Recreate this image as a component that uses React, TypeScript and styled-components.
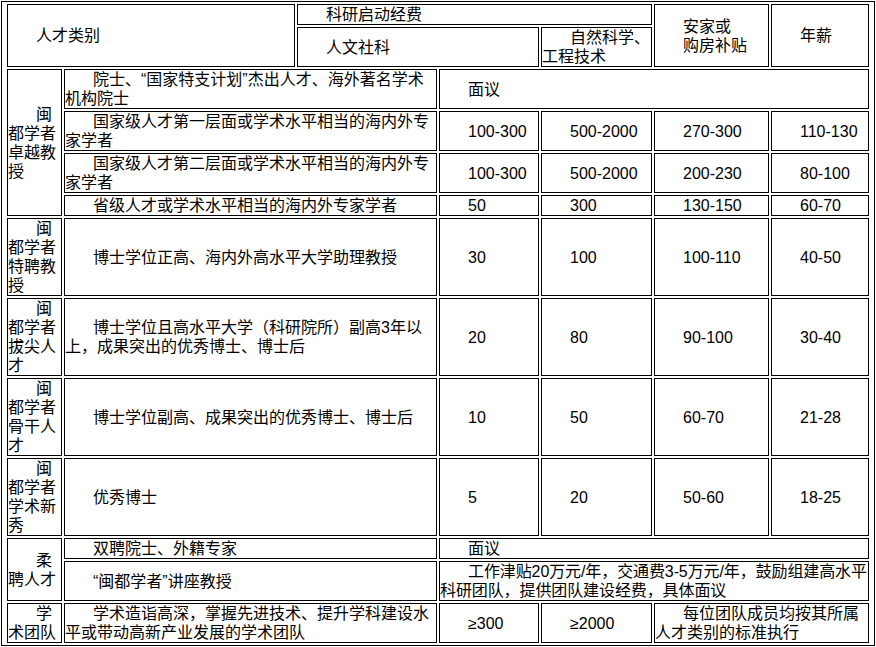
import styled, { createGlobalStyle, css } from "styled-components";

const GlobalStyle = createGlobalStyle`
    body {
        margin: 1px 0 0 1px;
        background: #fff;
        color: #000;
        font-family: "Liberation Sans", "Noto Sans CJK SC", sans-serif;
        font-size: 16px;
        line-height: 19px;
    }
`;

const Frame = styled.div`
    border: 1px solid #000;
    padding: 2px 5px;
    width: max-content;
`;

const Grid = styled.div`
    display: grid;
    grid-template-columns: 55px 231px 140px 100px 111px 115px 98px;
    grid-template-rows: 21px 40px 40px 40px 40px 21px 78px 78px 78px 78px 21px 40px 40px;
    gap: 2px;
`;

type CellProps = {
    $col: number;
    $row: number;
    $colSpan?: number;
    $rowSpan?: number;
    $tight?: boolean;
};

const Cell = styled.div<CellProps>`
    grid-column: ${(p) => `${p.$col} / span ${p.$colSpan ?? 1}`};
    grid-row: ${(p) => `${p.$row} / span ${p.$rowSpan ?? 1}`};
    border: 1px solid #000;
    display: flex;
    flex-direction: column;
    justify-content: center;
    text-indent: 28px;
    min-width: 0;
    overflow: hidden;

    ${(p) =>
        p.$tight &&
        css`
            letter-spacing: -0.1px;
        `}
`;

const Line = styled.div`
    display: block;
`;

type ValueRow = {
    category?: string;
    catSpan?: number;
    desc: string;
    values: string[];
};

const rows: ValueRow[] = [
    { category: "闽都学者卓越教授", catSpan: 4, desc: "国家级人才第一层面或学术水平相当的海内外专家学者", values: ["100-300", "500-2000", "270-300", "110-130"] },
    { desc: "国家级人才第二层面或学术水平相当的海内外专家学者", values: ["100-300", "500-2000", "200-230", "80-100"] },
    { desc: "省级人才或学术水平相当的海内外专家学者", values: ["50", "300", "130-150", "60-70"] },
    { category: "闽都学者特聘教授", catSpan: 1, desc: "博士学位正高、海内外高水平大学助理教授", values: ["30", "100", "100-110", "40-50"] },
    { category: "闽都学者拔尖人才", catSpan: 1, desc: "博士学位且高水平大学（科研院所）副高3年以上，成果突出的优秀博士、博士后", values: ["20", "80", "90-100", "30-40"] },
    { category: "闽都学者骨干人才", catSpan: 1, desc: "博士学位副高、成果突出的优秀博士、博士后", values: ["10", "50", "60-70", "21-28"] },
    { category: "闽都学者学术新秀", catSpan: 1, desc: "优秀博士", values: ["5", "20", "50-60", "18-25"] },
];

function App() {
    return (
        <>
            <GlobalStyle />
            <Frame>
                <Grid>
                    {/* header */}
                    <Cell $col={1} $row={1} $colSpan={2} $rowSpan={2}>人才类别</Cell>
                    <Cell $col={3} $row={1} $colSpan={3}>科研启动经费</Cell>
                    <Cell $col={6} $row={1} $rowSpan={2}>
                        <Line>安家或</Line>
                        <Line>购房补贴</Line>
                    </Cell>
                    <Cell $col={7} $row={1} $rowSpan={2}>年薪</Cell>
                    <Cell $col={3} $row={2} $colSpan={2}>人文社科</Cell>
                    <Cell $col={5} $row={2}>自然科学、工程技术</Cell>

                    {/* 卓越教授 first line */}
                    <Cell $col={2} $row={3} $colSpan={2}>院士、“国家特支计划”杰出人才、海外著名学术机构院士</Cell>
                    <Cell $col={4} $row={3} $colSpan={4}>面议</Cell>

                    {rows.map((r, i) => {
                        const row = i + 4;
                        return [
                            r.category ? (
                                <Cell key={`c${i}`} $col={1} $row={r.catSpan === 4 ? 3 : row} $rowSpan={r.catSpan}>
                                    {r.category}
                                </Cell>
                            ) : null,
                            <Cell key={`d${i}`} $col={2} $row={row} $colSpan={2}>{r.desc}</Cell>,
                            ...r.values.map((v, j) => (
                                <Cell key={`v${i}-${j}`} $col={4 + j} $row={row}>{v}</Cell>
                            )),
                        ];
                    })}

                    {/* 柔聘人才 */}
                    <Cell $col={1} $row={11} $rowSpan={2}>柔聘人才</Cell>
                    <Cell $col={2} $row={11} $colSpan={2}>双聘院士、外籍专家</Cell>
                    <Cell $col={4} $row={11} $colSpan={4}>面议</Cell>
                    <Cell $col={2} $row={12} $colSpan={2}>“闽都学者”讲座教授</Cell>
                    <Cell $col={4} $row={12} $colSpan={4} $tight>
                        工作津贴20万元/年，交通费3-5万元/年，鼓励组建高水平科研团队，提供团队建设经费，具体面议
                    </Cell>

                    {/* 学术团队 */}
                    <Cell $col={1} $row={13}>学术团队</Cell>
                    <Cell $col={2} $row={13} $colSpan={2}>学术造诣高深，掌握先进技术、提升学科建设水平或带动高新产业发展的学术团队</Cell>
                    <Cell $col={4} $row={13}>≥300</Cell>
                    <Cell $col={5} $row={13}>≥2000</Cell>
                    <Cell $col={6} $row={13} $colSpan={2}>每位团队成员均按其所属人才类别的标准执行</Cell>
                </Grid>
            </Frame>
        </>
    );
}

export default App;
